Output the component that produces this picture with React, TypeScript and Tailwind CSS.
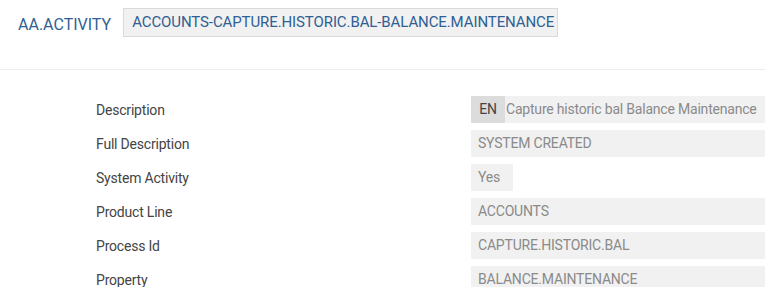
const ROWS: { label: string; value: string; lang?: string; short?: boolean }[] = [
  { label: 'Description', value: 'Capture historic bal Balance Maintenance', lang: 'EN' },
  { label: 'Full Description', value: 'SYSTEM CREATED' },
  { label: 'System Activity', value: 'Yes', short: true },
  { label: 'Product Line', value: 'ACCOUNTS' },
  { label: 'Process Id', value: 'CAPTURE.HISTORIC.BAL' },
  { label: 'Property', value: 'BALANCE.MAINTENANCE' },
];

export default function App() {
  return (
    <div className="h-[287px] w-[765px] overflow-hidden bg-white font-['Roboto',sans-serif]">
      <div className="flex h-[69px] items-start gap-3 pl-[18px] pt-2">
        <span className="mt-[5px] text-[16px] text-[#2f5f93]">AA.ACTIVITY</span>
        <div className="flex h-[29px] w-[435px] items-center border border-[#dadada] bg-[#f1f1f1] pl-2 text-[15px] tracking-[-0.1px] text-[#2f5f93]">
          ACCOUNTS-CAPTURE.HISTORIC.BAL-BALANCE.MAINTENANCE
        </div>
      </div>
      <div className="h-px bg-[#ececec]" />

      <div className="flex flex-col gap-[7px] pt-[26px] text-[14px] tracking-[-0.2px]">
        {ROWS.map((row) => (
          <div key={row.label} className="flex h-[27px] items-center">
            <span className="w-[471px] shrink-0 pl-24 pt-[2px] text-[#444]">{row.label}</span>
            {row.lang ? (
              <div className="flex h-full flex-1 items-center bg-[#f1f1f1] text-[#8a8a8a]">
                <span className="flex h-full w-[34px] items-center justify-center bg-[#dcdcdc] text-[#444]">{row.lang}</span>
                <span className="pl-[1px]">{row.value}</span>
              </div>
            ) : (
              <div
                className={
                  row.short
                    ? 'flex h-full w-[42px] items-center bg-[#f1f1f1] pl-[7px] text-[#8a8a8a]'
                    : 'flex h-full flex-1 items-center bg-[#f1f1f1] pl-[7px] text-[#8a8a8a]'
                }
              >
                {row.value}
              </div>
            )}
          </div>
        ))}
      </div>
    </div>
  );
}
